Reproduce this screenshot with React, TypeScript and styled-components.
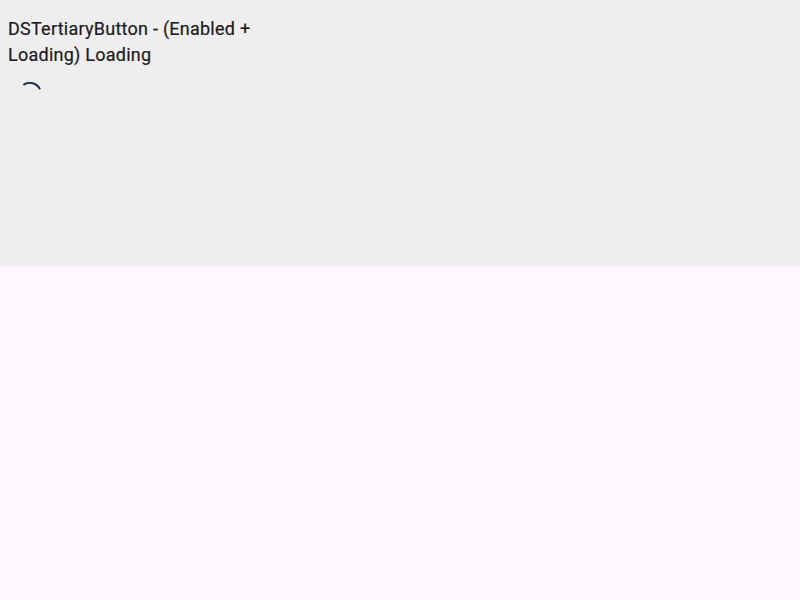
import React from "react";
import styled, { createGlobalStyle } from "styled-components";

const GlobalStyle = createGlobalStyle`
  body { margin: 0; background: #fef7ff; }
`;

const Page = styled.main`
  min-height: 100vh;
  background: #fef7ff;
`;

const Scenario = styled.section`
  box-sizing: border-box;
  height: 266px;
  padding: 16px 8px;
  background: #eeeeee;
  box-shadow: 0 1px 0 #f4f1f4;
`;

const Title = styled.h1`
  margin: 0;
  width: 260px;
  font: 400 18px/26px Roboto, sans-serif;
  letter-spacing: 0.25px;
  -webkit-text-stroke: 0.2px #1d1b20;
  color: #1d1b20;
`;

const TertiaryButton = styled.button`
  display: flex;
  margin: 14px 0 0 10px;
  padding: 0;
  border: 0;
  background: none;
`;

const Spinner = styled.svg`
  display: block;
  width: 24px;
  height: 24px;
`;

export default function App() {
  return (
    <Page>
      <GlobalStyle />
      <Scenario>
        <Title>DSTertiaryButton - (Enabled + Loading) Loading</Title>
        <TertiaryButton aria-label="Loading">
          <Spinner viewBox="0 0 24 24" fill="none" stroke="#1f2b4d" strokeWidth="2">
            <path d="M5.4 2.9A11.3 11.3 0 0 1 22 7.3" />
          </Spinner>
        </TertiaryButton>
      </Scenario>
    </Page>
  );
}
